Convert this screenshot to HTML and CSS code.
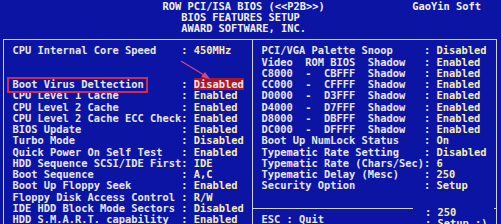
FILE: index.html
```html
<!DOCTYPE html>
<html>
<head>
<meta charset="utf-8">
<link rel="stylesheet" href="styles.css">
</head>
<body>
<div class="screen">
  <div class="header">
    <div class="hl">                          ROW PCI/ISA BIOS (&lt;&lt;P2B&gt;&gt;)              GaoYin Soft</div>
    <div class="hl">                             BIOS FEATURES SETUP</div>
    <div class="hl">                             AWARD SOFTWARE, INC.</div>
  </div>
  <div class="frame">
    <div class="panel left">
      <div class="row"><span class="lbl">CPU Internal Core Speed    : </span><span class="val">450MHz</span></div>
      <div class="row"> </div>
      <div class="row"> </div>
      <div class="row"><span class="lbl">Boot Virus Deltection      : </span><span class="val hi">Disabled</span></div>
      <div class="row"><span class="lbl">CPU Level 1 Cache          : </span><span class="val">Enabled</span></div>
      <div class="row"><span class="lbl">CPU Level 2 Cache          : </span><span class="val">Enabled</span></div>
      <div class="row"><span class="lbl">CPU Level 2 Cache ECC Check: </span><span class="val">Enabled</span></div>
      <div class="row"><span class="lbl">BIOS Update                : </span><span class="val">Enabled</span></div>
      <div class="row"><span class="lbl">Turbo Mode                 : </span><span class="val">Disabled</span></div>
      <div class="row"><span class="lbl">Quick Power On Self Test   : </span><span class="val">Enabled</span></div>
      <div class="row"><span class="lbl">HDD Sequence SCSI/IDE First: </span><span class="val">IDE</span></div>
      <div class="row"><span class="lbl">Boot Sequence              : </span><span class="val">A,C</span></div>
      <div class="row"><span class="lbl">Boot Up Floppy Seek        : </span><span class="val">Enabled</span></div>
      <div class="row"><span class="lbl">Floppy Disk Access Control : </span><span class="val">R/W</span></div>
      <div class="row"><span class="lbl">IDE HDD Block Mode Sectors : </span><span class="val">Disabled</span></div>
      <div class="row"><span class="lbl">HDD S.M.A.R.T. capability  : </span><span class="val">Enabled</span></div>
    </div>
    <div class="panel right">
      <div class="row"><span class="lbl">PCI/VGA Palette Snoop     : </span><span class="val">Disabled</span></div>
      <div class="row"><span class="lbl">Video  ROM BIOS  Shadow   : </span><span class="val">Enabled</span></div>
      <div class="row"><span class="lbl">C8000  -  CBFFF  Shadow   : </span><span class="val">Enabled</span></div>
      <div class="row"><span class="lbl">CC000  -  CFFFF  Shadow   : </span><span class="val">Enabled</span></div>
      <div class="row"><span class="lbl">D0000  -  D3FFF  Shadow   : </span><span class="val">Enabled</span></div>
      <div class="row"><span class="lbl">D4000  -  D7FFF  Shadow   : </span><span class="val">Enabled</span></div>
      <div class="row"><span class="lbl">D8000  -  DBFFF  Shadow   : </span><span class="val">Enabled</span></div>
      <div class="row"><span class="lbl">DC000  -  DFFFF  Shadow   : </span><span class="val">Enabled</span></div>
      <div class="row"><span class="lbl">Boot Up NumLock Status    : </span><span class="val">On</span></div>
      <div class="row"><span class="lbl">Typematic Rate Setting    : </span><span class="val">Disabled</span></div>
      <div class="row"><span class="lbl">Typematic Rate (Chars/Sec): </span><span class="val">6</span></div>
      <div class="row"><span class="lbl">Typematic Delay (Mesc)    : </span><span class="val">250</span></div>
      <div class="row"><span class="lbl">Security Option           : </span><span class="val">Setup</span></div>
      <div class="row"> </div>
      <div class="sep"><div class="sepline"></div></div>
      <div class="row"><span class="lbl">ESC : Quit</span></div>
    </div>
  </div>
  <div class="popup">
    <div class="row"><span class="lbl">  : </span><span class="val">250</span></div>
    <div class="row"><span class="lbl">  : </span><span class="val">Setup</span><span class="lbl"> :)</span></div>
  </div>
  <div class="markbox"></div>
  <svg class="arrow" width="501" height="224" viewBox="0 0 501 224">
    <line x1="181" y1="61" x2="204" y2="75" stroke="#d8467a" stroke-width="1.2"/>
    <polygon points="210,79 201,77 205,72" fill="#d8467a"/>
  </svg>
</div>
</body>
</html>
```

FILE: styles.css
```css
html, body {
  margin: 0;
  padding: 0;
  background: #0c14a4;
}

.screen {
  position: relative;
  width: 501px;
  height: 224px;
  overflow: hidden;
  background: #0c14a4;
  font-family: "DejaVu Sans Mono", "Liberation Mono", monospace;
  font-weight: 700;
  font-size: 10.38px;
  line-height: 11.25px;
  color: #e6e6ee;
}

.hl, .row {
  height: 11.25px;
  white-space: pre;
}

.header {
  color: #f0f0f4;
  padding-top: 0.6px;
}

.frame {
  margin: 4.4px 0 0 3px;
  width: 492px;
  height: 200px;
  border: 1px solid #cfd0e4;
  border-bottom: none;
  display: grid;
  grid-template-columns: 249px 1fr;
}

.panel {
  padding-top: 5.6px;
}

.left {
  padding-left: 8.5px;
  border-right: 1px solid #cfd0e4;
}

.right {
  padding-left: 8.5px;
}

.lbl {
  color: #e6e6ee;
}

.val {
  color: #f4eeb0;
}

.hi {
  background: #a8182c;
  color: #ffe4e0;
}

.sep {
  height: 11.25px;
  margin-left: -8.5px;
  display: flex;
  align-items: center;
}

.sepline {
  flex: 1;
  border-top: 1px solid #cfd0e4;
}

.popup {
  position: absolute;
  left: 412.5px;
  top: 207px;
  width: 81px;
  height: 20px;
  background: #0c14a4;
}

.markbox {
  position: absolute;
  left: 7px;
  top: 77px;
  width: 137px;
  height: 12px;
  border: 2px solid #cc2c52;
}

.arrow {
  position: absolute;
  left: 0;
  top: 0;
  pointer-events: none;
}
```
